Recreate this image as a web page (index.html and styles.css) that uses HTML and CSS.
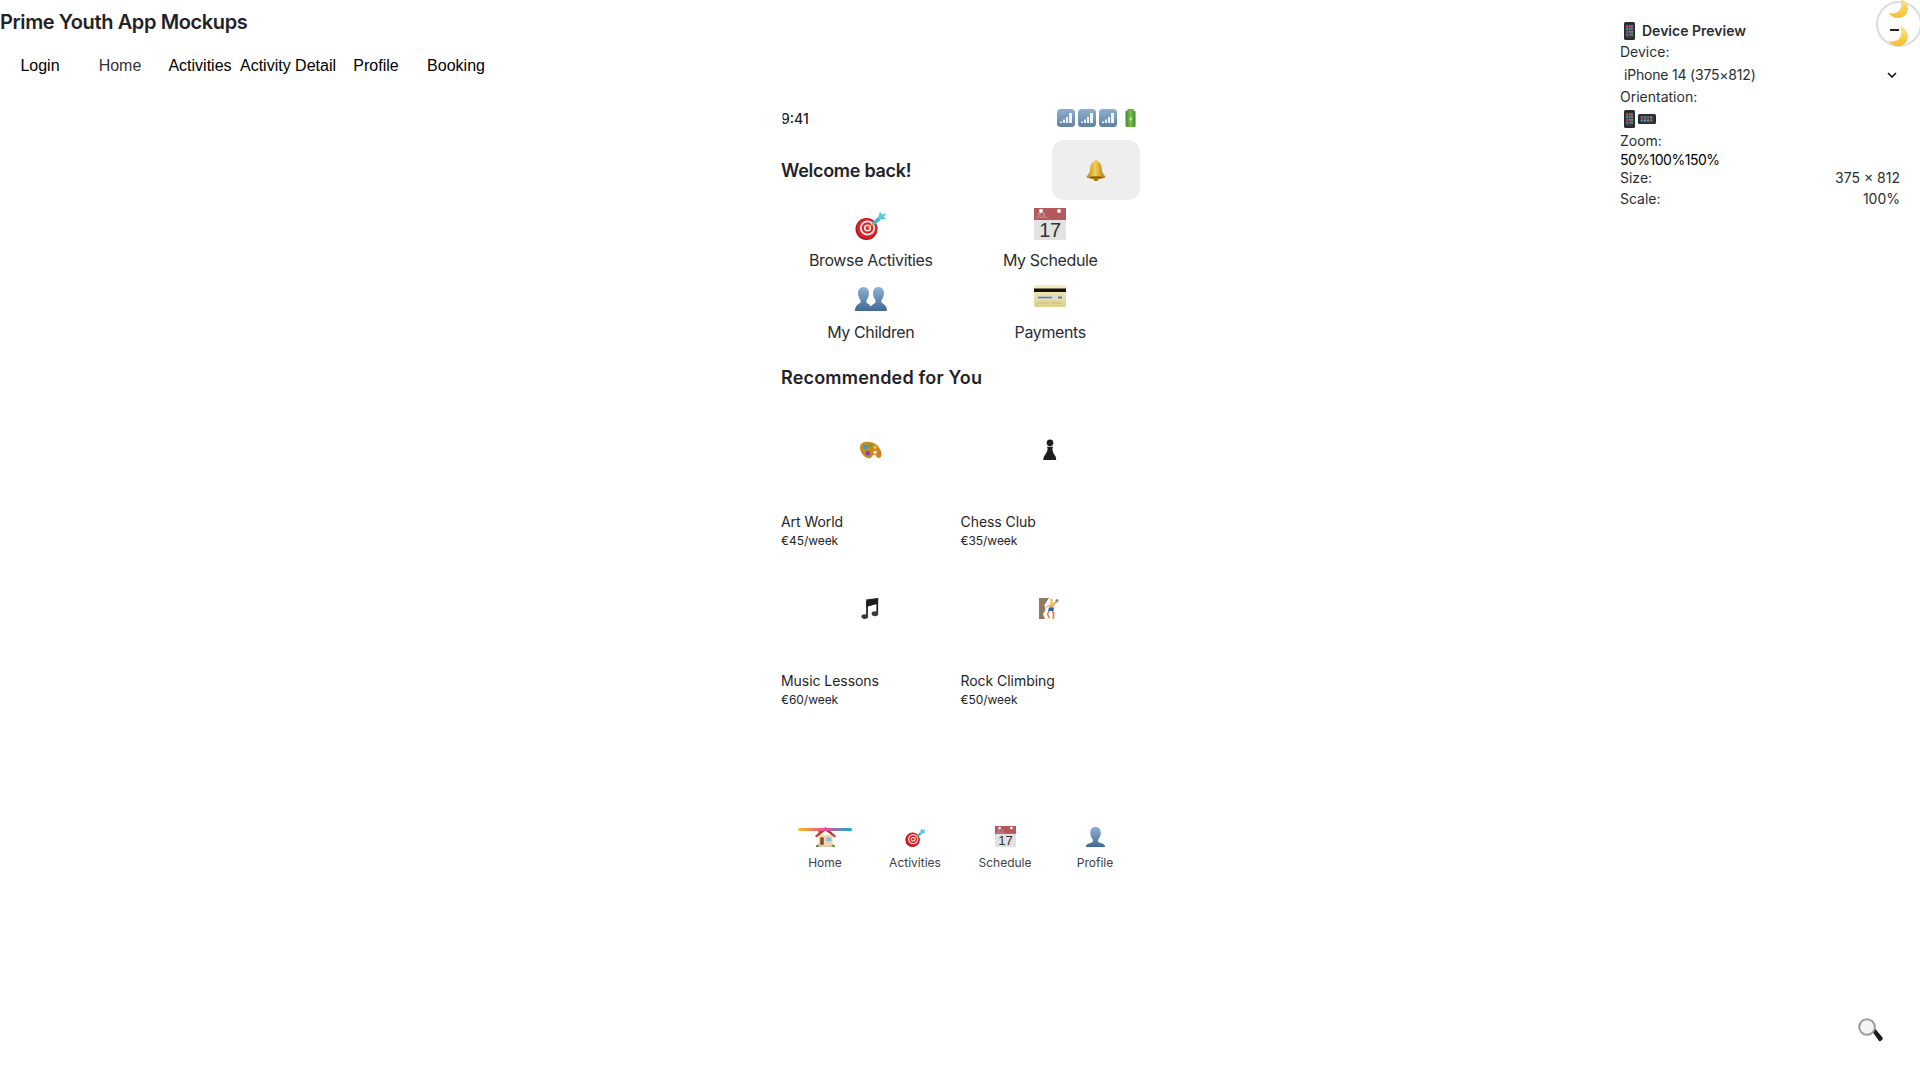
FILE: index.html
```html
<!DOCTYPE html>
<html lang="en">
<head>
    <meta charset="UTF-8">
    <title>Prime Youth App Mockups</title>
    <link rel="stylesheet" href="styles.css">
</head>
<body>
    <svg class="defs" width="0" height="0">
        <defs>
            <linearGradient id="sig" x1="0" y1="0" x2="0" y2="1"><stop offset="0" stop-color="#8fb0cf"/><stop offset="1" stop-color="#5f80a0"/></linearGradient>
            <linearGradient id="bat" x1="0" y1="0" x2="1" y2="0"><stop offset="0" stop-color="#3f8a2c"/><stop offset=".5" stop-color="#7fbb4f"/><stop offset="1" stop-color="#3f8a2c"/></linearGradient>
            <linearGradient id="bell" x1="0" y1="0" x2="1" y2="0"><stop offset="0" stop-color="#b98211"/><stop offset=".45" stop-color="#f6cf55"/><stop offset="1" stop-color="#a8740d"/></linearGradient>
            <linearGradient id="person" x1="0" y1="0" x2="0" y2="1"><stop offset="0" stop-color="#8db2d4"/><stop offset="1" stop-color="#3f6a94"/></linearGradient>
            <linearGradient id="moon" x1="0" y1="0" x2="0" y2="1"><stop offset="0" stop-color="#fde68a"/><stop offset="1" stop-color="#f5bd2c"/></linearGradient>
            <linearGradient id="cardfill" x1="0" y1="0" x2="0" y2="1"><stop offset="0" stop-color="#f4edbe"/><stop offset="1" stop-color="#dccf8e"/></linearGradient>
            <symbol id="i-signal" viewBox="0 0 18 18">
                <rect width="18" height="18" rx="3.5" fill="url(#sig)"/>
                <path d="M3 14h2v-1.500H3zM6 14h2v-3.500H6zM9 14h2V8H9zM12 14h3V4h-3z" fill="#eef4fa"/>
            </symbol>
            <symbol id="i-battery" viewBox="0 0 12 18">
                <rect x="3" y="0" width="6" height="3" fill="#6aa544"/>
                <rect x="1" y="1.500" width="10" height="16.500" rx="1.500" fill="url(#bat)"/>
                <path d="M7 7l-2.500 3.500h1.800L5.500 13l2.500-3.500H6.300z" fill="#d8efc0"/>
            </symbol>
            <symbol id="i-bell" viewBox="0 0 24 24">
                <path d="M12 2c-1 0-1.600.7-1.600 1.500C7.500 4.500 6.500 7 6.300 10.500 6 14.500 4.800 16.500 2.500 18.500c0 1.500 4 2.500 9.500 2.500s9.500-1 9.500-2.500c-2.300-2-3.500-4-3.800-8C17.500 7 16.500 4.500 13.600 3.500 13.600 2.700 13 2 12 2z" fill="url(#bell)"/>
                <ellipse cx="12" cy="19.500" rx="7" ry="1.300" fill="#8c6209"/>
                <ellipse cx="12" cy="21.500" rx="2.500" ry="1.500" fill="#a8740d"/>
            </symbol>
            <symbol id="i-target" viewBox="0 0 32 32">
                <circle cx="11.500" cy="21" r="11" fill="#a8121a"/>
                <circle cx="12" cy="20.500" r="10.300" fill="#d8232a"/>
                <circle cx="12.500" cy="20" r="7.600" fill="#f5eeee"/>
                <circle cx="12.500" cy="20" r="5.800" fill="#d8232a"/>
                <circle cx="12.500" cy="20" r="3.600" fill="#f5eeee"/>
                <circle cx="12.500" cy="20" r="1.900" fill="#d8232a"/>
                <path d="M13 19.500l6-4.500" stroke="#e8a93a" stroke-width="1.500"/>
                <path d="M17 15l6-6 2.500 3-6.500 5.500z" fill="#45b3c9"/>
                <path d="M23 9.500l2-6 2 3 4.500-1.500-2.500 4 2.500 2-6 .5z" fill="#5fc7d6"/>
            </symbol>
            <symbol id="i-cal" viewBox="0 0 32 32">
                <rect width="32" height="32" fill="#e2e2e2"/>
                <rect width="32" height="12" fill="#b4585f"/>
                <circle cx="7" cy="3" r="2" fill="#fff"/>
                <circle cx="25" cy="3" r="2" fill="#fff"/>
                <text x="2" y="10" class="cal-month">JUL</text>
                <text x="16" y="29" text-anchor="middle" class="cal-day">17</text>
            </symbol>
            <symbol id="i-people" viewBox="0 2 32 24">
                <path d="M8.500 2C4.500 2 3 5 3 8.500c0 2.500 1.200 5 2.500 6.500v2.500C3.500 19.500 0 20 0 26h17c0-6-3.500-6.500-5.500-8.500V15c1.300-1.500 2.500-4 2.500-6.500C14 5 12.500 2 8.500 2z" fill="url(#person)"/>
                <path d="M23.500 2c-4 0-5.500 3-5.500 6.500 0 2.500 1.200 5 2.500 6.500v2.500c-2 2-5.500 2.500-5.500 8.500h17c0-6-3.500-6.500-5.500-8.500V15c1.300-1.500 2.500-4 2.500-6.500C29 5 27.500 2 23.500 2z" fill="url(#person)"/>
            </symbol>
            <symbol id="i-person" viewBox="0 0 24 24">
                <path d="M12 1C7.500 1 6 4 6 8c0 3 1.300 5.500 3 7.500V18c-2 2-8 1.500-8 6h22c0-4.500-6-4-8-6v-2.500c1.700-2 3-4.500 3-7.500 0-4-1.500-7-6-7z" fill="url(#person)"/>
            </symbol>
            <symbol id="i-card" viewBox="0 0 32 22">
                <rect width="32" height="22" rx="2" fill="url(#cardfill)"/>
                <rect y="3.500" width="32" height="3.500" fill="#111"/>
                <rect x="3" y="10" width="26" height="5" fill="#d6dcd0"/>
                <path d="M4 12.500h14" stroke="#5a78b0" stroke-width="1.500"/>
                <rect x="24" y="11.500" width="4" height="2" fill="#777"/>
                <path d="M3 18h12M18 18h10" stroke="#c9bb80"/>
            </symbol>
            <symbol id="i-palette" viewBox="0 0 24 20">
                <path d="M3 1.500C7 -.5 15 0 19.500 5c2.500 3 4 6 4 9 0 3-2 5-4 4-2-1-2-3.500-4-3.500-2.500 0-2 4-5.500 4C5 18.500 0 12 0 7 0 4.500 1 2.500 3 1.500z" fill="#c98a1e"/>
                <circle cx="6" cy="6" r="2.600" fill="#2c9ddc"/>
                <circle cx="11.500" cy="4" r="1.900" fill="#4cae4f"/>
                <circle cx="8.500" cy="13" r="2.600" fill="#8a3fc0"/>
                <circle cx="16.500" cy="6.500" r="1.800" fill="#f0c02c"/>
                <circle cx="16.500" cy="12" r="1.700" fill="#f4f1e8"/>
                <circle cx="21" cy="13" r="1.700" fill="#e8604c"/>
            </symbol>
            <symbol id="i-pawn" viewBox="0 0 14 22">
                <circle cx="7" cy="4" r="3.500" fill="#1d1d1f"/>
                <path d="M3.500 8h7l-1 1.500c0 3.500 1 5.500 2.500 7.500.7 1 1.500 2 1.500 5H0c0-3 .8-4 1.500-5C3 15 4.500 13 4.500 9.500z" fill="#1d1d1f"/>
            </symbol>
            <symbol id="i-notes" viewBox="0 0 18 22">
                <path d="M5 4.500L17.500 0v16h-1.800V6L6.800 9v11H5z" fill="#1d1d1f"/>
                <path d="M5 1.500l12.500-1.500v6L5 9z" fill="#1d1d1f"/>
                <ellipse cx="3.500" cy="19.500" rx="3.500" ry="2.500" fill="#3a3a3c"/>
                <ellipse cx="14.200" cy="16.500" rx="3.500" ry="2.500" fill="#3a3a3c"/>
            </symbol>
            <symbol id="i-climb" viewBox="0 0 20 21">
                <path d="M0 0h10L8 3 5.500 7 6.500 12 4 16l2 5H0z" fill="#8e7a60"/>
                <path d="M15 14v7" stroke="#e6a8a8"/>
                <circle cx="12.500" cy="5" r="2" fill="#f3c79a"/>
                <path d="M11 2l1-2 2 2-1.500 2z" fill="#eebb55"/>
                <path d="M13 6l4.500-3.500 1.500 1-4.500 4.500-.5 3h-4l.5-4z" fill="#eeb060"/>
                <path d="M10 9.500h5l-.5 3.500H9z" fill="#2a63b5"/>
                <path d="M10.500 7L7 9.500" stroke="#e8ad7c" stroke-width="1.400"/>
                <path d="M10 13l-1.500 3.500 2 3.500M13.500 13l1 3-.5 5" stroke="#d77f2d" stroke-width="1.400" fill="none"/>
                <circle cx="18" cy="2.500" r="1.600" fill="#889"/>
            </symbol>
            <symbol id="i-house" viewBox="0 0 24 24">
                <rect x="4" y="10" width="16" height="12" fill="#f0d9ad"/>
                <path d="M12 1L0 11.500l1.500 1.500L12 5l10.500 8 1.500-1.500z" fill="#c8342c"/>
                <path d="M4 4h2.500v2L4 8z" fill="#a52a25"/>
                <rect x="6" y="13" width="4" height="8.500" fill="#8c4a22"/>
                <rect x="13" y="13" width="5.500" height="4.500" fill="#84bfe0"/>
                <path d="M1 24c0-2 1-3 2.500-3S6 22 6 24zM18 24c0-2 1-3 2.500-3s2.500 1 2.500 3z" fill="#4e8f37"/>
                <rect x="4" y="22" width="16" height="2" fill="#cfc9bd"/>
            </symbol>
            <symbol id="i-phone" viewBox="0 0 12 20" preserveAspectRatio="none">
                <rect width="12" height="20" rx="1.800" fill="#2b2b2d"/>
                <rect x="1.500" y="2.500" width="9" height="15" fill="#3b3f4a"/>
                <path d="M2.500 4h2v2h-2zM5.500 4h2v2h-2zM7.800 7h2v2h-2zM2.500 10h2v2h-2zM5.500 13h2v2h-2z" fill="#d2534a"/>
                <path d="M5.500 7h2v2h-2zM7.800 4h1.800v2H7.800zM5.500 10h2v2h-2zM2.500 13h2v2h-2z" fill="#4f8fd0"/>
                <path d="M2.500 7h2v2h-2zM7.800 10h2v2h-2zM7.800 13h2v2h-2z" fill="#5bae62"/>
            </symbol>
            <symbol id="i-phone-l" viewBox="0 0 18 10">
                <rect width="18" height="10" rx="1.500" fill="#2b2b2d"/>
                <rect x="2" y="1.500" width="14" height="7" fill="#3b3f4a"/>
                <path d="M3 2.500h2v2H3zM9 2.500h2v2H9zM12 5.500h2v2h-2z" fill="#d2534a"/>
                <path d="M6 2.500h2v2H6zM3 5.500h2v2H3zM12 2.500h2v2h-2z" fill="#4f8fd0"/>
                <path d="M6 5.500h2v2H6zM9 5.500h2v2H9z" fill="#5bae62"/>
            </symbol>
            <symbol id="i-moon" viewBox="0 0 20 20">
                <path d="M12 0c4.500 1.500 8 5.500 8 10.500C20 16 15.500 20 10 20c-4 0-7.500-2-10-5.500 4 2 9 1 11.500-2.500C14 8.500 14 4 12 0z" fill="url(#moon)"/>
            </symbol>
            <symbol id="i-search" viewBox="0 0 25 24">
                <path d="M14 13l3-2.500 7.500 9c1 1.500-2 4.500-3.500 3.500z" fill="#1c1c1e"/>
                <circle cx="9" cy="9" r="7.800" fill="#f2f4f5" stroke="#9a9da0" stroke-width="2"/>
            </symbol>
        </defs>
    </svg>

    <h1 class="page-title">Prime Youth App Mockups</h1>
    <nav class="mock-nav">
        <a class="mock-link">Login</a>
        <a class="mock-link current">Home</a>
        <a class="mock-link">Activities</a>
        <a class="mock-link">Activity Detail</a>
        <a class="mock-link">Profile</a>
        <a class="mock-link">Booking</a>
    </nav>

    <div class="stage">
        <main class="phone">
            <div class="status-bar">
                <span class="status-time">9:41</span>
                <span class="status-icons">
                    <svg class="ic-signal"><use href="#i-signal"/></svg>
                    <svg class="ic-signal"><use href="#i-signal"/></svg>
                    <svg class="ic-signal"><use href="#i-signal"/></svg>
                    <svg class="ic-battery"><use href="#i-battery"/></svg>
                </span>
            </div>

            <header class="welcome">
                <h2 class="heading welcome-title">Welcome back!</h2>
                <button class="bell-btn"><svg class="ic-bell"><use href="#i-bell"/></svg></button>
            </header>

            <section class="actions">
                <div class="action">
                    <svg class="ic-action"><use href="#i-target"/></svg>
                    <span>Browse Activities</span>
                </div>
                <div class="action">
                    <svg class="ic-action"><use href="#i-cal"/></svg>
                    <span>My Schedule</span>
                </div>
                <div class="action">
                    <svg class="ic-action ic-low"><use href="#i-people"/></svg>
                    <span>My Children</span>
                </div>
                <div class="action">
                    <svg class="ic-action ic-card"><use href="#i-card"/></svg>
                    <span>Payments</span>
                </div>
            </section>

            <h2 class="heading recommend-title">Recommended for You</h2>

            <section class="cards">
                <article class="card">
                    <div class="card-pic"><svg class="ic-palette"><use href="#i-palette"/></svg></div>
                    <h3>Art World</h3>
                    <p>€45/week</p>
                </article>
                <article class="card">
                    <div class="card-pic"><svg class="ic-pawn"><use href="#i-pawn"/></svg></div>
                    <h3>Chess Club</h3>
                    <p>€35/week</p>
                </article>
                <article class="card">
                    <div class="card-pic"><svg class="ic-notes"><use href="#i-notes"/></svg></div>
                    <h3>Music Lessons</h3>
                    <p>€60/week</p>
                </article>
                <article class="card">
                    <div class="card-pic"><svg class="ic-climb"><use href="#i-climb"/></svg></div>
                    <h3>Rock Climbing</h3>
                    <p>€50/week</p>
                </article>
            </section>

            <nav class="tabs">
                <div class="tab active">
                    <svg class="ic-tab"><use href="#i-house"/></svg>
                    <span>Home</span>
                </div>
                <div class="tab">
                    <svg class="ic-tab"><use href="#i-target"/></svg>
                    <span>Activities</span>
                </div>
                <div class="tab">
                    <svg class="ic-tab"><use href="#i-cal"/></svg>
                    <span>Schedule</span>
                </div>
                <div class="tab">
                    <svg class="ic-tab"><use href="#i-person"/></svg>
                    <span>Profile</span>
                </div>
            </nav>
        </main>
    </div>

    <aside class="device-panel">
        <div class="panel-title"><svg class="ic-phone"><use href="#i-phone"/></svg>Device Preview</div>
        <div class="panel-label">Device:</div>
        <div class="panel-select">
            <span>iPhone 14 (375×812)</span>
            <svg class="chevron" viewBox="0 0 10 6"><path d="M1 1l4 4 4-4" fill="none" stroke="#111" stroke-width="1.600"/></svg>
        </div>
        <div class="panel-label">Orientation:</div>
        <div class="panel-orient">
            <svg class="ic-phone"><use href="#i-phone"/></svg>
            <svg class="ic-phone-l"><use href="#i-phone-l"/></svg>
        </div>
        <div class="panel-label">Zoom:</div>
        <div class="panel-zoom"><span>50%</span><span>100%</span><span>150%</span></div>
        <div class="panel-row"><span>Size:</span><span>375 × 812</span></div>
        <div class="panel-row"><span>Scale:</span><span>100%</span></div>
    </aside>

    <button class="panel-toggle">
        <svg class="ic-moon moon-top"><use href="#i-moon"/></svg>
        <span class="minus"></span>
        <svg class="ic-moon moon-bottom"><use href="#i-moon"/></svg>
    </button>

    <svg class="search-float"><use href="#i-search"/></svg>
</body>
</html>
```

FILE: styles.css
```css
* {
    padding: 0;
    margin: 0;
    box-sizing: border-box;
}

body {
    font-family: Inter, "Liberation Sans", sans-serif;
    color: #1f2328;
    background: #fff;
    overflow: hidden;
    height: 1080px;
}

svg {
    display: block;
}

.defs {
    position: absolute;
}

.page-title {
    font-size: 20px;
    line-height: 24px;
    font-weight: 600;
    letter-spacing: -0.38px;
    padding-top: 10px;
}

.mock-nav {
    display: flex;
    padding-top: 21px;
    height: 54px;
    font-family: "Liberation Sans", Arial, sans-serif;
    font-size: 16px;
    line-height: 22px;
    color: #000;
}

.mock-link {
    min-width: 80px;
    text-align: center;
}

.mock-link.current {
    color: #333;
}

.stage {
    display: flex;
    justify-content: center;
    padding-left: 15px;
    padding-top: 20px;
}

.phone {
    width: 375px;
    padding: 0 15px 0 1px;
    display: flex;
    flex-direction: column;
}

.status-bar {
    display: flex;
    justify-content: space-between;
    align-items: center;
    height: 20px;
    font-size: 14px;
    font-weight: 500;
}

.status-time {
    clip-path: inset(0 0 0 1.5px);
}

.status-icons {
    display: flex;
    gap: 3px;
}

.ic-signal {
    width: 18px;
    height: 18px;
}

.ic-battery {
    width: 13px;
    height: 18px;
    margin: 0 3px 0 4px;
}

.welcome {
    display: flex;
    justify-content: space-between;
    align-items: center;
    margin-top: 12px;
    height: 60px;
}

.heading {
    font-size: 18px;
    line-height: 22px;
    font-weight: 600;
}

.welcome-title {
    padding-top: 2px;
    letter-spacing: -0.28px;
}

.bell-btn {
    width: 88px;
    height: 60px;
    border: 0;
    border-radius: 12px;
    background: #eeeeee;
    display: flex;
    align-items: center;
    justify-content: center;
}

.ic-bell {
    width: 24px;
    height: 24px;
}

.actions {
    display: grid;
    grid-template-columns: 1fr 1fr;
    margin-top: 8px;
}

.action {
    display: flex;
    flex-direction: column;
    align-items: center;
    height: 72px;
    font-size: 16px;
    line-height: 24px;
    letter-spacing: -0.37px;
    color: #2a2e33;
}

.action span {
    margin-top: 8px;
}

.ic-action {
    width: 32px;
    height: 32px;
}

.ic-low {
    height: 26px;
    margin-top: 6px;
}

.ic-card {
    height: 22px;
    margin: 5px 0;
}

.recommend-title {
    margin-top: 15px;
    letter-spacing: 0.19px;
}

.cards {
    display: grid;
    grid-template-columns: 1fr 1fr;
    margin-top: 17px;
}

.card {
    height: 159px;
}

.card-pic {
    height: 96px;
    padding-top: 33px;
    display: flex;
    justify-content: center;
    align-items: flex-start;
}

.card h3 {
    font-size: 14px;
    line-height: 20px;
    font-weight: 400;
    letter-spacing: -0.05px;
    margin-top: 10px;
}

.card p {
    font-size: 12px;
    line-height: 16px;
    letter-spacing: -0.05px;
    margin-top: 1px;
}

.ic-palette {
    width: 22px;
    height: 19px;
    margin-top: 2px;
}

.ic-pawn {
    width: 14px;
    height: 21px;
}

.ic-notes {
    width: 18px;
    height: 21px;
    margin-right: 2px;
}

.ic-climb {
    width: 20px;
    height: 21px;
    margin-right: 3px;
}

.tabs {
    display: grid;
    grid-template-columns: repeat(4, 90px);
    margin-left: -1px;
    margin-top: 98px;
}

.tab {
    display: flex;
    flex-direction: column;
    align-items: center;
    font-size: 12px;
    line-height: 16px;
    color: #3c4147;
    position: relative;
    padding-top: 4px;
}

.tab span {
    margin-top: 8px;
}

.tab.active::before {
    content: "";
    position: absolute;
    top: 6px;
    left: 18px;
    width: 54px;
    height: 2.500px;
    border-radius: 2px;
    background: linear-gradient(90deg, #fbbf24, #ec4899 50%, #06b6d4);
    z-index: 1;
}

.ic-tab {
    width: 21px;
    height: 21px;
}

.device-panel {
    position: absolute;
    top: 20px;
    right: 20px;
    width: 280px;
    font-size: 14px;
    line-height: 20px;
    color: #2a2e33;
}

.panel-title {
    display: flex;
    align-items: center;
    gap: 7px;
    font-weight: 600;
    padding-left: 4px;
    height: 22px;
}

.panel-label {
    height: 20px;
}

.panel-select {
    display: flex;
    justify-content: space-between;
    align-items: center;
    height: 25px;
    letter-spacing: -0.2px;
    padding: 0 3px 0 4px;
}

.panel-orient {
    display: flex;
    align-items: center;
    gap: 3px;
    height: 24px;
    padding-left: 4px;
}

.panel-zoom {
    display: flex;
    height: 16px;
    line-height: 17px;
    letter-spacing: -0.5px;
    color: #000;
}

.panel-row {
    display: flex;
    justify-content: space-between;
    height: 21px;
    line-height: 21px;
}

.chevron {
    width: 10px;
    height: 6px;
}

.ic-phone {
    width: 11px;
    height: 18px;
}

.ic-phone-l {
    width: 18px;
    height: 10px;
}

.panel-toggle {
    position: absolute;
    top: 1px;
    left: 1876px;
    width: 46px;
    height: 46px;
    border-radius: 50%;
    border: 2px solid #d9dde2;
    background: #fff;
}

.minus {
    position: absolute;
    left: 12px;
    top: 26px;
    width: 9px;
    height: 1.500px;
    background: #222;
}

.ic-moon {
    position: absolute;
    width: 20px;
    height: 20px;
}

.moon-top {
    left: 10px;
    top: -5px;
}

.moon-bottom {
    left: 10px;
    top: 23px;
}

.search-float {
    position: absolute;
    left: 1858px;
    top: 1018px;
    width: 25px;
    height: 24px;
}

.cal-month {
    font-family: "Liberation Sans", sans-serif;
    font-size: 7px;
    fill: #dca0a0;
}

.cal-day {
    font-family: "Liberation Sans", sans-serif;
    font-size: 20px;
    fill: #333;
}
```
